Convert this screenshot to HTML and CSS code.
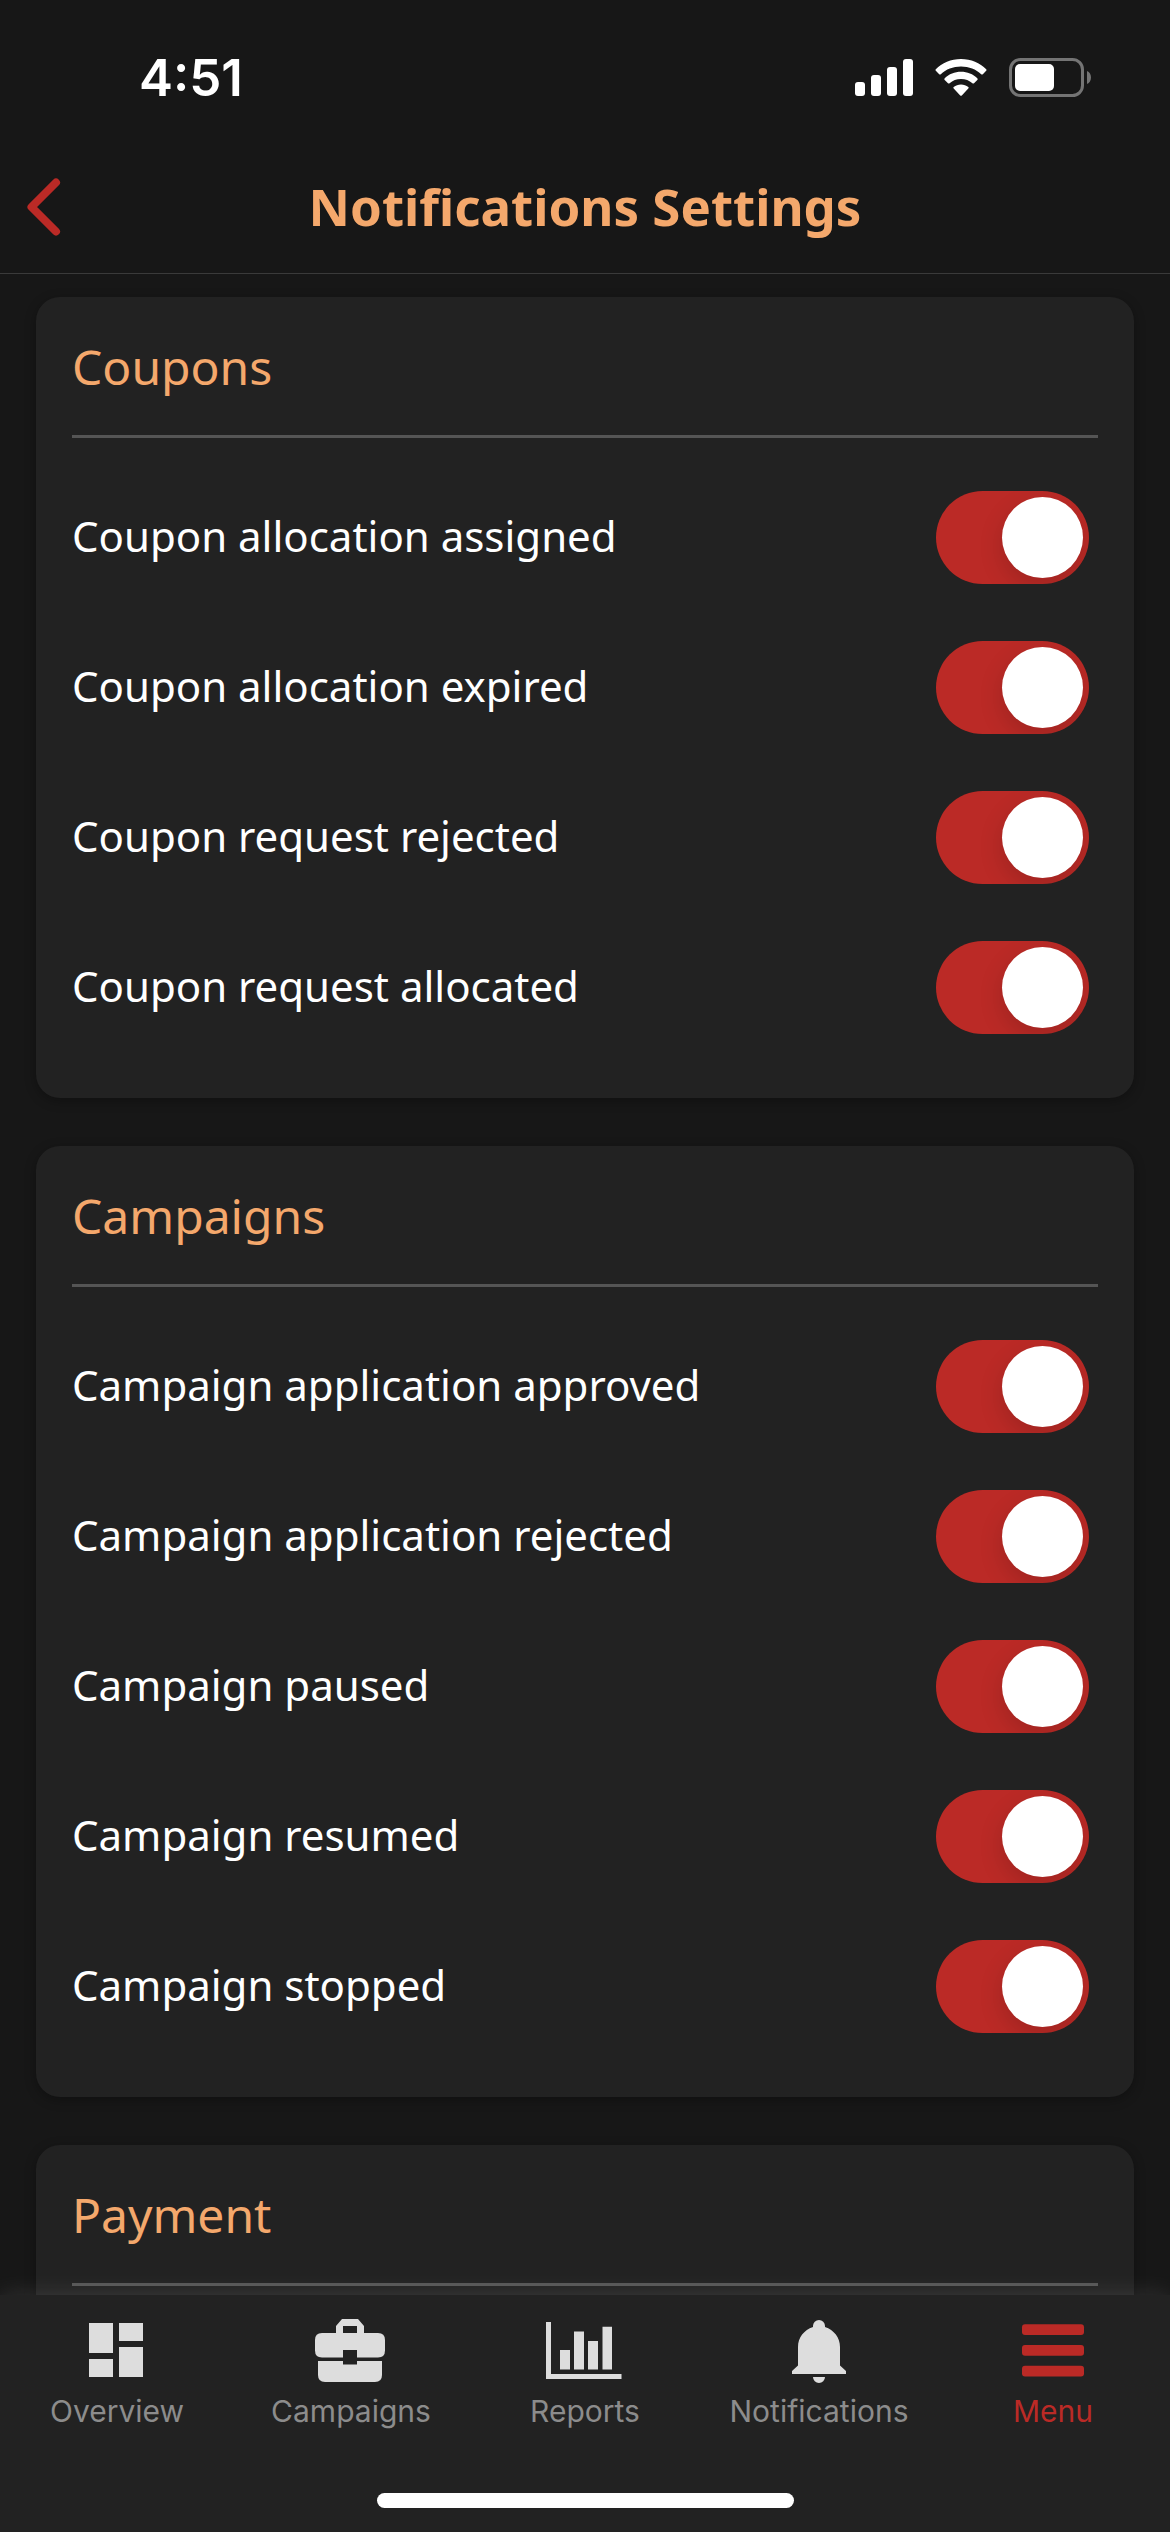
FILE: index.html
```html
<!DOCTYPE html>
<html lang="en">
<head>
  <meta charset="utf-8">
  <meta name="viewport" content="width=device-width, initial-scale=1">
  <title>Notifications Settings</title>
  <link rel="stylesheet" href="styles.css">
</head>
<body>
  <div class="status-bar">
    <time class="clock">4:51</time>
    <div class="status-icons">
      <svg width="58" height="40" viewBox="0 0 58 40" fill="#fff" aria-hidden="true">
        <rect x="0" y="24" width="10" height="14" rx="3"/>
        <rect x="16" y="17" width="10" height="21" rx="3"/>
        <rect x="32" y="9" width="10" height="29" rx="3"/>
        <rect x="48" y="1" width="10" height="37" rx="3"/>
      </svg>
      <svg width="52" height="40" viewBox="0 0 52 40" fill="#fff" aria-hidden="true">
        <path d="M26 1C16 1 7 5 .8 11.200q-.8.8 0 1.600L4.200 16.200q.8.8 1.600 0C11 11.400 18 8.600 26 8.600s15 2.800 20.200 7.600q.8.8 1.600 0L51.200 12.800q.8-.8 0-1.600C45 5 36 1 26 1z"/>
        <path d="M26 13.800c-6.300 0-12 2.400-16.300 6.400q-.9.900 0 1.800l3.300 3.200q.8.800 1.600 0c3-2.700 7-4.200 11.400-4.200s8.400 1.500 11.400 4.200q.8.800 1.600 0l3.300-3.200q.9-.9 0-1.800C38 16.200 32.300 13.800 26 13.800z"/>
        <path d="M26 26.500c-2.800 0-5.300 1-7.300 2.500q-.9.800 0 1.600l6.500 6.800q.8.800 1.600 0l6.500-6.800q.9-.8 0-1.600c-2-1.500-4.500-2.500-7.300-2.500z"/>
      </svg>
      <svg width="82" height="40" viewBox="0 0 82 40" aria-hidden="true">
        <rect x="1.500" y="1.500" width="72" height="36" rx="10" fill="none" stroke="#747474" stroke-width="3"/>
        <rect x="6" y="6" width="39" height="27" rx="5" fill="#fff"/>
        <path d="M78 13c2.600 1.200 4 3.500 4 6.500s-1.400 5.300-4 6.500z" fill="#747474"/>
      </svg>
    </div>
  </div>

  <header class="nav-bar">
    <button class="back" type="button" aria-label="Back">
      <svg width="34" height="58" viewBox="0 0 34 58" fill="none" stroke="#bb2a26" stroke-width="8" stroke-linecap="round" stroke-linejoin="round" aria-hidden="true">
        <path d="M29 4.500 4.500 29 29 53.500"/>
      </svg>
    </button>
    <h1 class="nav-title">Notifications Settings</h1>
  </header>

  <main class="content">
    <section class="card">
      <h2 class="card-title">Coupons</h2>
      <div class="rows">
        <label class="row"><span class="row-text">Coupon allocation assigned</span><input class="switch" type="checkbox" role="switch" checked></label>
        <label class="row"><span class="row-text">Coupon allocation expired</span><input class="switch" type="checkbox" role="switch" checked></label>
        <label class="row"><span class="row-text">Coupon request rejected</span><input class="switch" type="checkbox" role="switch" checked></label>
        <label class="row"><span class="row-text">Coupon request allocated</span><input class="switch" type="checkbox" role="switch" checked></label>
      </div>
    </section>

    <section class="card">
      <h2 class="card-title">Campaigns</h2>
      <div class="rows">
        <label class="row"><span class="row-text">Campaign application approved</span><input class="switch" type="checkbox" role="switch" checked></label>
        <label class="row"><span class="row-text">Campaign application rejected</span><input class="switch" type="checkbox" role="switch" checked></label>
        <label class="row"><span class="row-text">Campaign paused</span><input class="switch" type="checkbox" role="switch" checked></label>
        <label class="row"><span class="row-text">Campaign resumed</span><input class="switch" type="checkbox" role="switch" checked></label>
        <label class="row"><span class="row-text">Campaign stopped</span><input class="switch" type="checkbox" role="switch" checked></label>
      </div>
    </section>

    <section class="card">
      <h2 class="card-title">Payment</h2>
      <div class="rows"></div>
    </section>
  </main>

  <footer class="tab-bar">
    <nav class="tabs">
      <a class="tab" href="#overview">
        <svg width="84" height="66" viewBox="0 0 84 66" fill="#ddd" aria-hidden="true">
          <path d="M14 5h24v30H14zM14 41h24v18H14zM44 5h24v18H44zM44 29h24v30H44z"/>
        </svg>
        Overview
      </a>
      <a class="tab" href="#campaigns">
        <svg width="84" height="66" viewBox="0 0 84 66" fill="#ddd" aria-hidden="true">
          <path fill-rule="evenodd" d="M27 15V8l6-7h16l6 7v7h14q7 0 7 7v10.500q0 7-7 7H48V32H34v7.500H13q-7 0-7-7V22q0-7 7-7zM34 8v7h14V8z"/>
          <path d="M9 43h25v3.500h14V43h25v14q0 7-7 7H16q-7 0-7-7z"/>
        </svg>
        Campaigns
      </a>
      <a class="tab" href="#reports">
        <svg width="84" height="66" viewBox="0 0 84 66" fill="#ddd" aria-hidden="true">
          <path d="M3 4h5v52h70.500v5H3zM17 32h10v19.500H17zM31 13.500h10v38H31zM45 23h10v28.500H45zM59.500 8.700H69v42.800h-9.500z"/>
        </svg>
        Reports
      </a>
      <a class="tab" href="#notifications">
        <svg width="84" height="66" viewBox="0 0 84 66" fill="#ddd" aria-hidden="true">
          <path d="M36 9V8a6 6 0 0 1 12 0v1c9 3 15 10.500 15 20v18.500l6 5.500v3H15v-3l6-5.500V29c0-9.500 6-17 15-20zM36 59h12a6 6 0 0 1-12 0z"/>
        </svg>
        Notifications
      </a>
      <a class="tab tab-active" href="#menu" aria-current="page">
        <svg width="84" height="66" viewBox="0 0 84 66" fill="#bb2a26" aria-hidden="true">
          <rect x="11" y="6.300" width="62" height="10.700" rx="3"/>
          <rect x="11" y="27" width="62" height="10.700" rx="3"/>
          <rect x="11" y="47.700" width="62" height="10.700" rx="3"/>
        </svg>
        Menu
      </a>
    </nav>
    <div class="home-indicator"></div>
  </footer>
</body>
</html>
```
FILE: styles.css
```css
* {
  box-sizing: border-box;
}

body {
  margin: 0;
  height: 100vh;
  display: flex;
  flex-direction: column;
  overflow: hidden;
  background: #171717;
  color: #fff;
  font-family: "Noto Sans", sans-serif;
}

.status-bar {
  flex: none;
  display: flex;
  align-items: center;
  justify-content: space-between;
  padding: 46px 79px 32px 139px;
}

.clock {
  font: 600 51px/63px Inter, sans-serif;
}

.status-icons {
  display: flex;
  gap: 22px;
}

.status-icons svg,
.back svg,
.tab svg {
  display: block;
}

.nav-bar {
  flex: none;
  display: grid;
  grid-template-columns: 90px 1fr 90px;
  align-items: center;
  height: 133px;
  border-bottom: 1px solid #3a3a3a;
}

.back {
  justify-self: start;
  margin: 0;
  padding: 0 27px;
  border: 0;
  background: none;
}

.nav-title {
  margin: 0;
  padding-bottom: 3px;
  color: #f4a86c;
  font-size: 51px;
  font-weight: 700;
  line-height: 70px;
  text-align: center;
}

.content {
  flex: 1;
  min-height: 0;
  overflow-y: auto;
  scrollbar-width: none;
  display: flex;
  flex-direction: column;
  gap: 48px;
  padding: 23px 36px;
}

.card {
  flex: none;
  padding: 0 36px 36px;
  border-radius: 24px;
  background: #222;
  box-shadow: 0 3px 12px rgba(0, 0, 0, 0.3);
}

.card-title {
  margin: 0;
  padding: 37px 0 35px;
  border-bottom: 3px solid #555;
  color: #f4a86c;
  font-size: 48px;
  font-weight: 400;
  line-height: 66px;
}

.rows {
  padding-top: 24px;
}

.row {
  display: flex;
  align-items: center;
  justify-content: space-between;
  height: 150px;
  padding-right: 9px;
  font-size: 42px;
  line-height: 58px;
}

.row-text {
  padding-bottom: 2px;
}

.switch {
  appearance: none;
  flex: none;
  display: flex;
  width: 153px;
  height: 93px;
  margin: 0;
  padding: 6px;
  border-radius: 47px;
  background: #555;
}

.switch::before {
  content: "";
  width: 81px;
  height: 81px;
  border-radius: 50%;
  background: #fff;
  box-shadow: 0 9px 24px rgba(0, 0, 0, 0.15);
}

.switch:checked {
  justify-content: flex-end;
  overflow: hidden;
  background: #bb2a26;
}

.tab-bar {
  flex: none;
  position: relative;
  display: flex;
  flex-direction: column;
  align-items: center;
  gap: 62px;
  padding: 23px 0 24px;
  background: #222;
  box-shadow: 0 0 24px rgba(255, 255, 255, 0.12);
}

.tabs {
  align-self: stretch;
  display: grid;
  grid-template-columns: repeat(5, 1fr);
}

.tab {
  display: flex;
  flex-direction: column;
  align-items: center;
  gap: 7px;
  color: #8c8c8c;
  font: 400 30px/40px Inter, sans-serif;
  text-decoration: none;
}

.tab-active {
  color: #bb2a26;
}

.home-indicator {
  width: 417px;
  max-width: 60%;
  height: 15px;
  border-radius: 8px;
  background: #fff;
}
```
